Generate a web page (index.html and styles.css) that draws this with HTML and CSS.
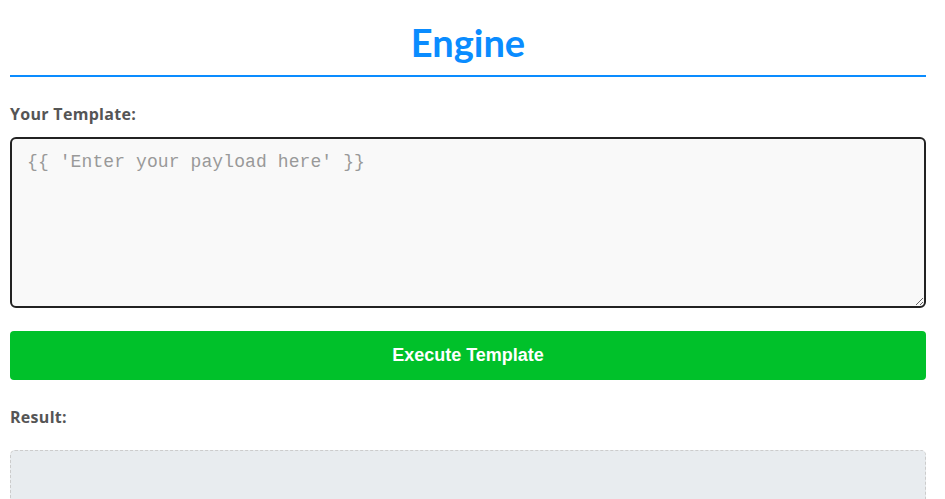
FILE: index.html
```html
<!DOCTYPE html>
<html>
<head>
<meta charset="utf-8">
<link rel="stylesheet" href="styles.css">
</head>
<body>
<div class="container">
  <h1 class="title">Engine</h1>
  <label class="label" for="tpl">Your Template:</label>
  <textarea id="tpl" class="editor" placeholder="{{ 'Enter your payload here' }}"></textarea>
  <button class="run">Execute Template</button>
  <div class="label result-label">Result:</div>
  <div class="result"></div>
</div>
</body>
</html>
```
FILE: styles.css
```css
html, body { margin: 0; padding: 0; background: #fff; }
body { font-family: "Open Sans", sans-serif; }
.container {
  width: 916px;
  margin-left: 10px;
  display: flex;
  flex-direction: column;
}
.title {
  margin: 18px 0 0;
  text-align: center;
  font-family: Lato, sans-serif;
  font-weight: 700;
  font-size: 38px;
  line-height: 48px;
  color: #0a8cff;
  padding-bottom: 9px;
  border-bottom: 2px solid #0a8cff;
}
.label {
  margin-top: 26px;
  font-size: 16px;
  letter-spacing: 0.3px;
  font-weight: 700;
  color: #555;
  line-height: 22px;
}
.editor {
  margin-top: 12px;
  height: 171px;
  box-sizing: border-box;
  border: 2px solid #222;
  border-radius: 6px;
  background: #f9f9f9;
  padding: 13px 15px;
  font-family: "Liberation Mono", monospace;
  font-size: 18px;
  letter-spacing: 0.1px;
  resize: vertical;
  outline: none;
}
.editor::placeholder { color: #999; }
.run {
  margin-top: 23px;
  height: 49px;
  border: none;
  border-radius: 4px;
  background: #00c12a;
  color: #fff;
  font-family: "Liberation Sans", Arial, sans-serif;
  font-weight: 700;
  font-size: 18px;
  cursor: pointer;
}
.result-label { margin-top: 26px; }
.result {
  margin-top: 22px;
  height: 80px;
  border: 1px dashed #ccc;
  border-radius: 5px;
  background: #e8ecef;
}
```
